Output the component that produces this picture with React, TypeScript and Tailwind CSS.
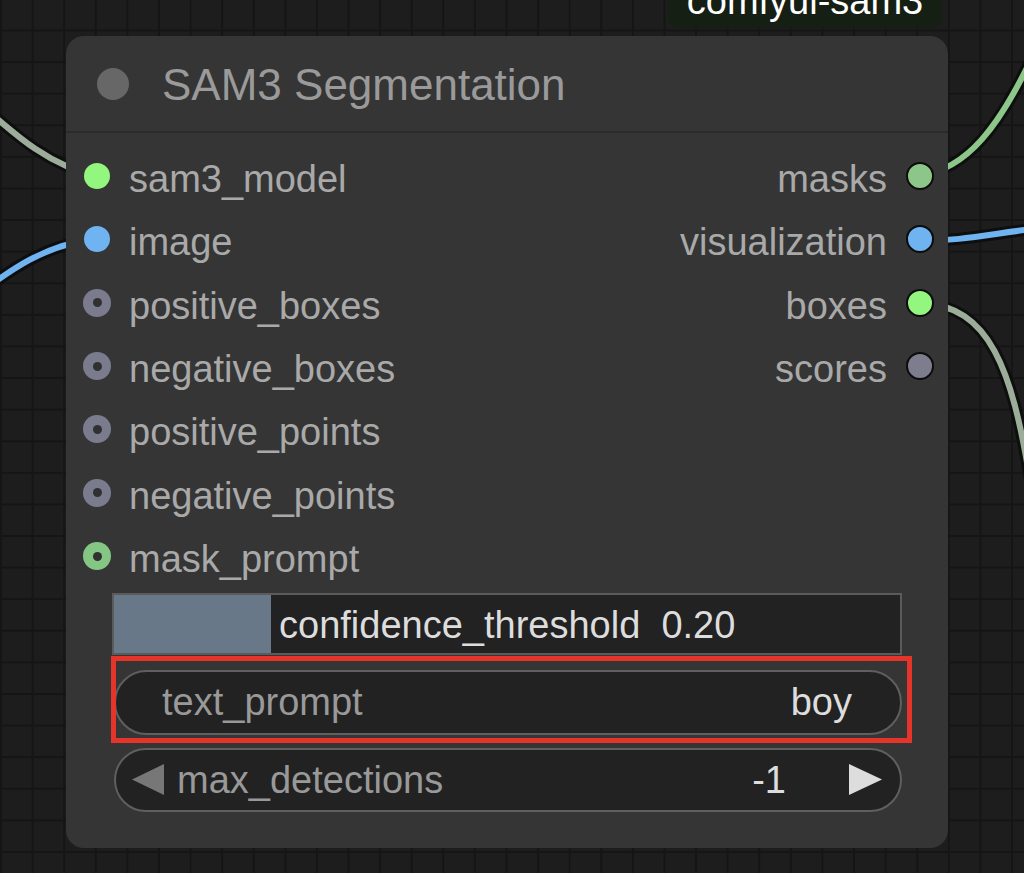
import React from 'react';

type Slot = { name: string; color: string; ring?: boolean };

const inputs: Slot[] = [
  { name: 'sam3_model', color: '#93f67f' },
  { name: 'image', color: '#6fb3f1' },
  { name: 'positive_boxes', color: '#7b7b8e', ring: true },
  { name: 'negative_boxes', color: '#7b7b8e', ring: true },
  { name: 'positive_points', color: '#7b7b8e', ring: true },
  { name: 'negative_points', color: '#7b7b8e', ring: true },
  { name: 'mask_prompt', color: '#84c683', ring: true },
];

const outputs: Slot[] = [
  { name: 'masks', color: '#8cc689' },
  { name: 'visualization', color: '#6fb3f1' },
  { name: 'boxes', color: '#93f67f' },
  { name: 'scores', color: '#7d7d8e' },
];

const wires = [
  { d: 'M -30 95 C 10 130, 45 165, 97 176', color: '#9cae9a' },
  { d: 'M -30 300 C 10 270, 45 244, 97 239', color: '#6fb3f1' },
  { d: 'M 920 175 C 965 170, 1000 130, 1040 40', color: '#8cc689' },
  { d: 'M 920 241 C 960 241, 990 234, 1040 228', color: '#6fb3f1' },
  { d: 'M 920 303 C 990 305, 1012 370, 1030 480', color: '#9cae9a' },
];

function InputDot({ slot }: { slot: Slot }) {
  return (
    <div className="w-[28px] h-[28px] flex items-center justify-center">
      {slot.ring ? (
        <div
          className="w-[28px] h-[28px] rounded-full flex items-center justify-center"
          style={{ backgroundColor: slot.color }}
        >
          <div className="w-[9px] h-[9px] rounded-full bg-[#303030]" />
        </div>
      ) : (
        <div className="w-[26px] h-[26px] rounded-full" style={{ backgroundColor: slot.color }} />
      )}
    </div>
  );
}

function OutputDot({ slot }: { slot: Slot }) {
  return (
    <div
      className="w-[28px] h-[28px] rounded-full border-[2.5px] border-[#0c0c0c]"
      style={{ backgroundColor: slot.color }}
    />
  );
}

export default function App() {
  return (
    <div className="relative w-[1024px] h-[873px] overflow-hidden bg-[#1d1d1d] bg-[linear-gradient(to_right,#151515_1.5px,transparent_1.5px),linear-gradient(to_bottom,#151515_1.5px,transparent_1.5px)] bg-[size:31.6px_31.6px] bg-[position:0px_29.5px] font-['Liberation_Sans',Arial,sans-serif]">
      {/* links */}
      <svg className="absolute inset-0 pointer-events-none" width="1024" height="873" viewBox="0 0 1024 873">
        {wires.map((w, i) => (
          <g key={i} fill="none" strokeLinecap="round">
            <path d={w.d} stroke="#0e0e0e" strokeWidth="12" />
            <path d={w.d} stroke={w.color} strokeWidth="6" />
          </g>
        ))}
      </svg>

      {/* group badge */}
      <div className="absolute left-[668px] top-[-18px] w-[274px] h-[46px] rounded-[12px] bg-[#151f13] text-white text-[38px] leading-[38px] text-center">
        comfyui-sam3
      </div>

      {/* node */}
      <div className="absolute left-[66px] top-[36px] w-[882px] h-[812px] rounded-[18px] bg-[#353535] flex flex-col">
        <div className="h-[95px] flex items-center pl-[31px] gap-[33px]">
          <div className="w-[32px] h-[32px] rounded-full bg-[#676767]" />
          <span className="text-[44px] leading-[44px] text-[#9a9a9a] translate-y-[1px]">SAM3 Segmentation</span>
        </div>
        <div className="h-[2px] bg-[#2b2b2b]" />

        <div className="pt-[11px] flex justify-between">
          <div className="flex flex-col pl-[17px]">
            {inputs.map((s) => (
              <div key={s.name} className="h-[63.45px] flex items-center gap-[18px]">
                <InputDot slot={s} />
                <span className="text-[38px] leading-[38px] text-[#a9a9a9] translate-y-[2.5px]">{s.name}</span>
              </div>
            ))}
          </div>
          <div className="flex flex-col pr-[14px]">
            {outputs.map((s) => (
              <div key={s.name} className="h-[63.45px] flex items-center justify-end gap-[19px]">
                <span className="text-[38px] leading-[38px] text-[#a9a9a9] translate-y-[2.5px]">{s.name}</span>
                <OutputDot slot={s} />
              </div>
            ))}
          </div>
        </div>

        {/* confidence slider */}
        <div className="mt-[4.5px] mx-[46px] h-[62px] border-2 border-[#5b5b5b] bg-[#222222] flex items-stretch">
          <div className="w-[157px] bg-[#687888]" />
          <div className="flex items-center pl-[8px]">
            <span className="text-[38px] leading-[38px] text-[#dddddd] whitespace-pre translate-y-[1px]">confidence_threshold  0.20</span>
          </div>
        </div>

        {/* text prompt */}
        <div className="relative mt-[15px] ml-[48px] mr-[46px] h-[65px] rounded-full border-2 border-[#5f5f5f] bg-[#222222] flex items-center justify-between pl-[46px] pr-[48px]">
          <span className="text-[38px] leading-[38px] text-[#999999]">text_prompt</span>
          <span className="text-[38px] leading-[38px] text-[#dddddd]">boy</span>
          <div className="absolute -left-[5px] -top-[16px] -right-[12px] -bottom-[10px] border-[5px] border-[#e5352b] pointer-events-none" />
        </div>

        {/* max detections */}
        <div className="mt-[13px] ml-[48px] mr-[46px] h-[64px] rounded-full border-2 border-[#5f5f5f] bg-[#222222] flex items-center pl-[16px] pr-[18px]">
          <svg width="32" height="31" viewBox="0 0 32 31">
            <polygon points="32,0 32,31 0,15.5" fill="#777777" />
          </svg>
          <span className="ml-[13px] text-[38px] leading-[38px] text-[#999999]">max_detections</span>
          <span className="ml-auto text-[38px] leading-[38px] text-[#dddddd]">-1</span>
          <svg className="ml-[63px]" width="33" height="31" viewBox="0 0 33 31">
            <polygon points="0,0 0,31 33,15.5" fill="#dddddd" />
          </svg>
        </div>
      </div>
    </div>
  );
}
